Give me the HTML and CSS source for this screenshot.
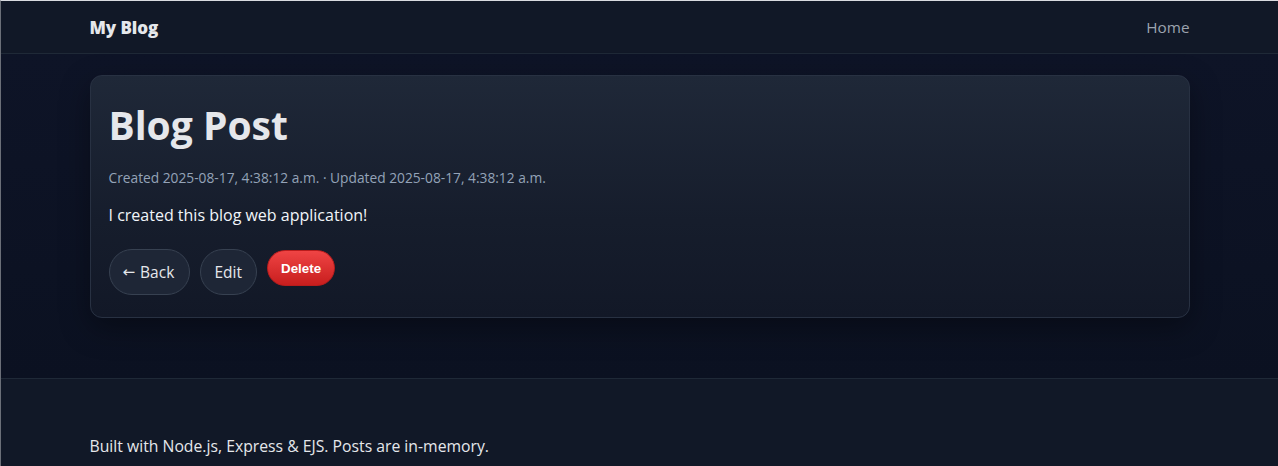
FILE: index.html
```html
<!DOCTYPE html>
<html lang="en">
<head>
<meta charset="utf-8">
<title>Blog Post</title>
<link rel="stylesheet" href="styles.css">
</head>
<body>
<div class="frame">
  <header class="site-header">
    <div class="container nav">
      <a class="brand" href="#">My Blog</a>
      <a class="nav-link" href="#">Home</a>
    </div>
  </header>
  <main class="site-main">
    <div class="container">
      <article class="card">
        <h1 class="title">Blog Post</h1>
        <p class="meta">Created 2025-08-17, 4:38:12 a.m. · Updated 2025-08-17, 4:38:12 a.m.</p>
        <p class="content">I created this blog web application!</p>
        <div class="actions">
          <a class="btn btn-back" href="#"><span class="arrow">←</span> Back</a>
          <a class="btn" href="#">Edit</a>
          <form class="inline-form">
            <button type="button" class="btn-danger">Delete</button>
          </form>
        </div>
      </article>
    </div>
  </main>
  <footer class="site-footer">
    <div class="container">
      <p class="footer-text">Built with Node.js, Express &amp; EJS. Posts are in-memory.</p>
    </div>
  </footer>
</div>
</body>
</html>
```

FILE: styles.css
```css
* { box-sizing: border-box; }
html, body { margin: 0; padding: 0; }
body {
  background: #0f1629;
  color: #e5e7eb;
  font-family: "Open Sans", "Noto Sans", sans-serif;
  height: 466px;
  overflow: hidden;
}
.frame {
  border-top: 1px solid #d9dbe0;
  border-left: 1px solid #6b6f78;
  min-height: 466px;
  display: flex;
  flex-direction: column;
}
.container {
  width: 1100px;
  margin: 0 auto;
}
.site-header {
  background: #111827;
  border-bottom: 1px solid #1f2937;
  height: 53px;
}
.nav {
  height: 52px;
  display: flex;
  align-items: center;
  justify-content: space-between;
}
.brand {
  color: #e5e7eb;
  font-weight: 800;
  font-size: 17px;
  text-decoration: none;
  letter-spacing: -0.1px;
}
.nav-link {
  color: #9ca3af;
  font-size: 15.3px;
  text-decoration: none;
}
.site-main {
  background: linear-gradient(180deg, #0e1427 0%, #0b1121 100%);
  padding: 21px 0 60px;
}
.card {
  background: linear-gradient(180deg, #1f2838 0%, #161d2c 60%, #121827 100%);
  border: 1px solid #283142;
  border-radius: 12px;
  padding: 21px 18px 22px;
  box-shadow: 0 10px 30px rgba(0, 0, 0, 0.35);
  height: 243px;
}
.title {
  margin: 0;
  font-size: 39px;
  line-height: 56px;
  font-weight: 700;
  color: #e5e7eb;
}
.meta {
  margin: 16px 0 0;
  font-size: 13.75px;
  line-height: 18px;
  color: #94a3b8;
}
.content {
  margin: 17px 0 0;
  font-size: 16px;
  line-height: 22px;
  color: #f1f5f9;
}
.actions {
  margin-top: 23px;
  display: flex;
  align-items: flex-start;
  gap: 10px;
}
.btn {
  display: inline-flex;
  align-items: center;
  gap: 5px;
  height: 46px;
  padding: 0 14px 0 14px;
  border-radius: 999px;
  border: 1px solid #374151;
  background: #1e2636;
  color: #e5e7eb;
  font-size: 15.5px;
  text-decoration: none;
}
.btn-back {
  padding: 0 14px 0 13px;
  width: 81px;
}
.arrow {
  font-family: "DejaVu Sans", sans-serif;
  font-size: 15px;
}
.inline-form { margin: 0; }
.btn-danger {
  margin-top: 1px;
  height: 36px;
  padding: 0 13px;
  border-radius: 999px;
  border: 1px solid #b91c1c;
  background: linear-gradient(180deg, #ef4444 0%, #c81e1e 100%);
  color: #ffffff;
  font-family: "Liberation Sans", Arial, sans-serif;
  font-size: 13.33px;
  font-weight: 700;
  cursor: pointer;
}
.site-footer {
  flex: 1;
  background: #111827;
  border-top: 1px solid #1f2937;
  padding-top: 56px;
}
.footer-text {
  margin: 0;
  font-size: 15.75px;
  line-height: 22px;
  color: #e5e7eb;
}
```
